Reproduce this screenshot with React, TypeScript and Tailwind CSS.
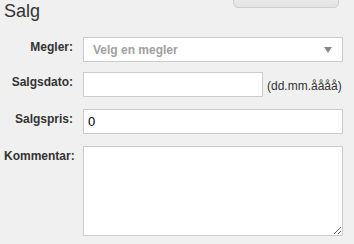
import React from "react";

function FieldLabel({ children }: { children: React.ReactNode }) {
  return (
    <label className="pt-px text-right text-[12px] font-bold leading-[18px] text-[#333]">
      {children}
    </label>
  );
}

export default function App() {
  return (
    <div
      className="min-h-[244px] w-[354px] overflow-hidden bg-[#f0f0f0] pl-[4px]"
      style={{ fontFamily: '"Liberation Sans", Arial, sans-serif' }}
    >
      <div className="flex items-start">
        <h2 className="text-[18px] font-normal leading-[22px] text-[#333]">
          Salg
        </h2>
        <button className="ml-auto mr-[15px] -mt-[23px] h-[31px] w-[106px] rounded-[5px] border border-[#cdcdcd] bg-gradient-to-b from-[#f7f7f7] to-[#e4e4e4] text-[12px] font-bold text-white">
          Lagre
        </button>
      </div>

      <div className="mt-[15px] grid grid-cols-[69px_1fr] gap-x-[10px]">
        <FieldLabel>Megler:</FieldLabel>
        <div className="flex h-[25px] w-[260px] items-center border border-[#cccccc] bg-white pl-[9px] pr-[9px]">
          <span className="text-[12px] font-bold text-[#a0a0a0]">
            Velg en megler
          </span>
          <span className="ml-auto mr-[1px] h-0 w-0 border-x-[4px] border-t-[6px] border-x-transparent border-t-[#8a8a8a]" />
        </div>

        <div className="col-span-2 h-[10px]" />

        <FieldLabel>Salgsdato:</FieldLabel>
        <div className="flex items-center">
          <input
            type="text"
            className="h-[25px] w-[180px] border border-[#cccccc] bg-white px-[4px] text-[13px] outline-none"
          />
          <span className="ml-[4px] pt-[3px] text-[12px] text-[#333]">
            (dd.mm.åååå)
          </span>
        </div>

        <div className="col-span-2 h-[12px]" />

        <FieldLabel>Salgspris:</FieldLabel>
        <input
          type="text"
          defaultValue="0"
          className="h-[25px] w-[260px] border border-[#cccccc] bg-white px-[4px] text-[13px] text-black outline-none"
        />

        <div className="col-span-2 h-[12px]" />

        <FieldLabel>Kommentar:</FieldLabel>
        <textarea className="block h-[90px] w-[260px] border border-[#cccccc] bg-white p-[4px] text-[13px] outline-none" />
      </div>
    </div>
  );
}
